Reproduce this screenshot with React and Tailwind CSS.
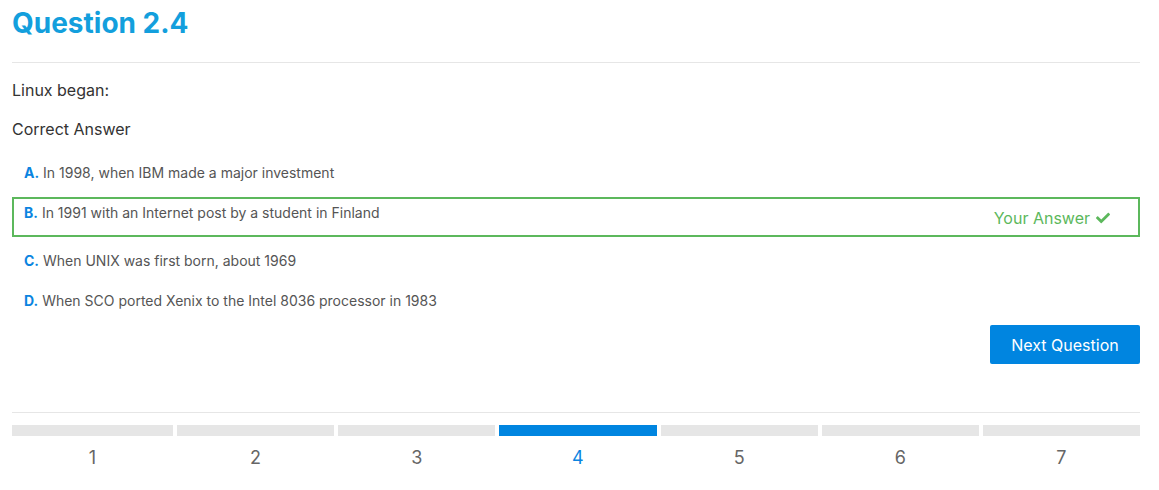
import React from 'react';

const options = [
  { key: 'A', text: 'In 1998, when IBM made a major investment' },
  { key: 'B', text: 'In 1991 with an Internet post by a student in Finland', picked: true },
  { key: 'C', text: 'When UNIX was first born, about 1969' },
  { key: 'D', text: 'When SCO ported Xenix to the Intel 8036 processor in 1983' },
];

const steps = [1, 2, 3, 4, 5, 6, 7];

const Check = () => (
  <svg viewBox="0 0 512 512" className="w-[14px] h-[14px] fill-current">
    <path d="M173.9 439.4l-166.4-166.4c-10-10-10-26.2 0-36.2l36.2-36.2c10-10 26.2-10 36.2 0L192 312.7 432.1 72.6c10-10 26.2-10 36.2 0l36.2 36.2c10 10 10 26.2 0 36.2L210.1 439.4c-10 10-26.2 10-36.2 0z" />
  </svg>
);

const App = () => {
  return (
    <div className="pl-[12px] pr-[19px] bg-white min-h-[490px] text-[#333]" style={{ fontFamily: 'Inter, "Liberation Sans", sans-serif' }}>
      <h1 className="pt-[6px] text-[28px] leading-[34px] font-bold text-[#139fdd]">Question 2.4</h1>
      <div className="mt-[22px] border-t border-[#e6e6e6]" />

      <p className="mt-[15px] text-[16px] leading-[24px]">Linux began:</p>
      <p className="mt-[15px] text-[16px] leading-[24px]">Correct Answer</p>

      {/* Options */}
      <div className="mt-[12px]">
        {options.map(o =>
          o.picked ? (
            <div key={o.key} className="my-[4px] h-[40px] border-2 border-[#5cb85c] flex justify-between items-start px-[10px]">
              <div className="mt-[4px] text-[14px] leading-[20px] text-[#555]">
                <span className="font-bold text-[#0a84e0]">{o.key}.</span> {o.text}
              </div>
              <div className="mt-[7px] mr-[18px] flex items-center gap-[6px] text-[16px] leading-[24px] text-[#5cb85c]">
                Your Answer <Check />
              </div>
            </div>
          ) : (
            <div key={o.key} className="h-[40px] flex items-center px-[12px] text-[14px] leading-[20px] text-[#555]">
              <span><span className="font-bold text-[#0a84e0]">{o.key}.</span> {o.text}</span>
            </div>
          )
        )}
      </div>

      <div className="flex justify-end mt-[4px]">
        <button className="w-[150px] h-[39px] rounded-[2px] bg-[#0085e0] text-white text-[16px]">Next Question</button>
      </div>

      <div className="mt-[48px] border-t border-[#e6e6e6]" />

      {/* Progress */}
      <div className="mt-[12px] flex gap-[4px]">
        {steps.map(n => (
          <div key={n} className={n === 1 ? 'w-[161px] shrink-0' : 'flex-1'}>
            <div className={`h-[11px] ${n === 4 ? 'bg-[#0085e0]' : 'bg-[#e6e6e6]'}`} />
            <div className={`mt-[10px] text-center text-[18px] leading-[24px] ${n === 4 ? 'text-[#0a84e0]' : 'text-[#666]'}`}>{n}</div>
          </div>
        ))}
      </div>
    </div>
  );
};

export default App;
